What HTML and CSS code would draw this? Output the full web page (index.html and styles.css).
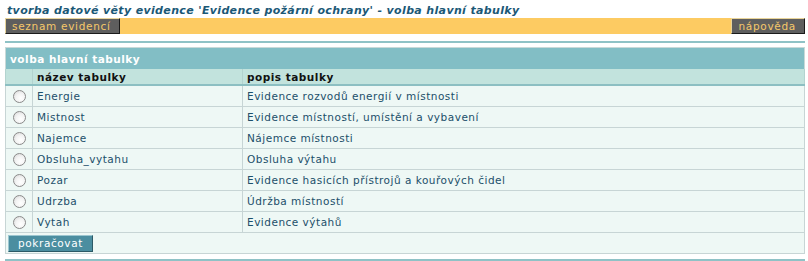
FILE: index.html
```html
<!DOCTYPE html>
<html>
<head>
<meta charset="utf-8">
<link rel="stylesheet" href="styles.css">
</head>
<body>
<div class="page">
  <h1 class="title">tvorba datové věty evidence 'Evidence požární ochrany' - volba hlavní tabulky</h1>
  <div class="menubar">
    <span class="menubtn">seznam evidencí</span>
    <span class="menubtn">nápověda</span>
  </div>
  <div class="rule"></div>
  <table class="grid">
    <tr class="caption"><td colspan="3">volba hlavní tabulky</td></tr>
    <tr class="colhead"><td class="c-radio"></td><td class="c-name">název tabulky</td><td>popis tabulky</td></tr>
    <tr class="row"><td class="c-radio"><span class="radio"></span></td><td>Energie</td><td>Evidence rozvodů energií v místnosti</td></tr>
    <tr class="row"><td class="c-radio"><span class="radio"></span></td><td>Mistnost</td><td>Evidence místností, umístění a vybavení</td></tr>
    <tr class="row"><td class="c-radio"><span class="radio"></span></td><td>Najemce</td><td>Nájemce místnosti</td></tr>
    <tr class="row"><td class="c-radio"><span class="radio"></span></td><td>Obsluha_vytahu</td><td>Obsluha výtahu</td></tr>
    <tr class="row"><td class="c-radio"><span class="radio"></span></td><td>Pozar</td><td>Evidence hasicích přístrojů a kouřových čidel</td></tr>
    <tr class="row"><td class="c-radio"><span class="radio"></span></td><td>Udrzba</td><td>Údržba místností</td></tr>
    <tr class="row"><td class="c-radio"><span class="radio"></span></td><td>Vytah</td><td>Evidence výtahů</td></tr>
    <tr class="foot"><td colspan="3"><span class="gobtn">pokračovat</span></td></tr>
  </table>
  <div class="rule rule-bottom"></div>
</div>
</body>
</html>
```
FILE: styles.css
```css
html, body {
  margin: 0;
  padding: 0;
  background: #ffffff;
}
body {
  font-family: "DejaVu Sans", Verdana, sans-serif;
  font-size: 10px;
}
.page {
  padding: 3px 3px 0 5px;
}
.title {
  margin: 0 0 0 2px;
  height: 15px;
  line-height: 15px;
  font-size: 11px;
  font-weight: bold;
  font-style: italic;
  color: #1b5876;
  letter-spacing: 0.35px;
}
.menubar {
  display: flex;
  justify-content: space-between;
  background: #fdcb62;
  height: 16px;
}
.menubtn {
  display: block;
  background: #5e5e5e;
  color: #f5c86a;
  font-size: 10.5px;
  letter-spacing: 0.7px;
  line-height: 14px;
  padding: 0 8px 0 6px;
  border-top: 1px solid #e8d49a;
  border-left: 1px solid #e8d49a;
  border-right: 1px solid #1a1a1a;
  border-bottom: 1px solid #1a1a1a;
}
.rule {
  height: 2px;
  background: #8fc2c6;
  margin-top: 7px;
}
.grid {
  margin-top: 4px;
  width: 800px;
  border-collapse: collapse;
  border: 1px solid #c9d9d8;
}
.grid td {
  padding: 0 4px;
  border: 1px solid #c7d5d5;
  font-size: 10.5px;
  letter-spacing: 0.5px;
}
.caption td {
  background: #82bec5;
  color: #ffffff;
  font-weight: bold;
  height: 21px;
  padding-left: 4px;
  border: none;
}
.colhead td {
  background: #c2e3dd;
  color: #111111;
  font-weight: bold;
  height: 15px;
  border-top: none;
  border-bottom: 2px solid #8cbfc2;
  border-left: 1px solid #b3d3cf;
  border-right: 1px solid #b3d3cf;
}
.c-radio {
  width: 18px;
}
.c-name {
  width: 201px;
}
.row td {
  background: #eef8f5;
  color: #1c4f6a;
  height: 20px;
}
.row td.c-radio {
  padding: 0 0 0 7px;
}
.radio {
  display: block;
  width: 13px;
  height: 13px;
  border-radius: 50%;
  border: 1px solid #8a8a8a;
  background: radial-gradient(circle at 60% 65%, #ffffff 0%, #f4f4f4 45%, #d6d6d6 100%);
  box-sizing: border-box;
}
.foot td {
  background: #eef8f5;
  padding: 1px 2px 1px 2px;
  height: 18px;
}
.gobtn {
  display: inline-block;
  background: #4b8ea0;
  color: #ffffff;
  font-size: 10.5px;
  letter-spacing: 0.6px;
  line-height: 15px;
  padding: 0 9px 0 9px;
  border-top: 1px solid #9cc6d0;
  border-left: 1px solid #9cc6d0;
  border-right: 1px solid #2c5a66;
  border-bottom: 1px solid #2c5a66;
}
.rule-bottom {
  margin-top: 5px;
}
```
